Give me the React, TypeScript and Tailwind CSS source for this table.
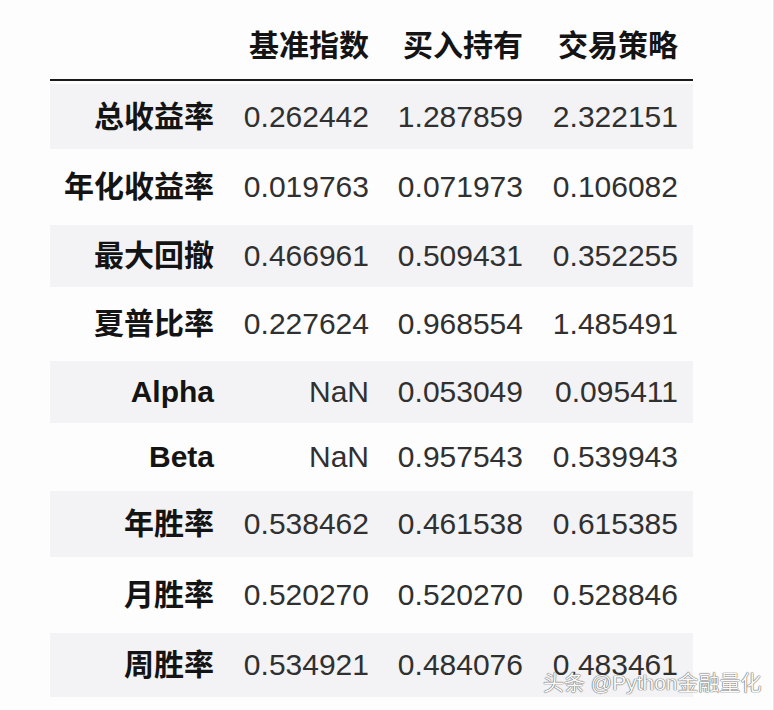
const columns = ["基准指数", "买入持有", "交易策略"];

type Row = {
  label: string;
  values: string[];
  height: string;
};

const rows: Row[] = [
  { label: "总收益率", values: ["0.262442", "1.287859", "2.322151"], height: "h-[71px]" },
  { label: "年化收益率", values: ["0.019763", "0.071973", "0.106082"], height: "h-[70px]" },
  { label: "最大回撤", values: ["0.466961", "0.509431", "0.352255"], height: "h-[68px]" },
  { label: "夏普比率", values: ["0.227624", "0.968554", "1.485491"], height: "h-[68px]" },
  { label: "Alpha", values: ["NaN", "0.053049", "0.095411"], height: "h-[68px]" },
  { label: "Beta", values: ["NaN", "0.957543", "0.539943"], height: "h-[62px]" },
  { label: "年胜率", values: ["0.538462", "0.461538", "0.615385"], height: "h-[72px]" },
  { label: "月胜率", values: ["0.520270", "0.520270", "0.528846"], height: "h-[70px]" },
  { label: "周胜率", values: ["0.534921", "0.484076", "0.483461"], height: "h-[70px]" },
];

const gridCols = "grid grid-cols-[179px_155px_154px_155px]";

export default function App() {
  return (
    <div className="relative w-[774px] h-[710px] overflow-hidden bg-[#fdfdfe] border-r border-[#e4e4e6] font-['Liberation_Sans','Noto_Sans_CJK_SC',sans-serif] text-[30px] leading-[36px]">
      <div className="ml-[50px] w-[643px]">
        <div className={`${gridCols} h-[81px] items-end pb-[15px] border-b-2 border-[#1a1a1a]`}>
          <div />
          {columns.map((column) => (
            <div key={column} className="text-right pr-[15px] font-bold text-[#141414]">
              {column}
            </div>
          ))}
        </div>

        {rows.map((row, index) => (
          <div key={row.label} className={`${row.height} py-[3px]`}>
            <div
              className={`${gridCols} h-full items-center ${
                index % 2 === 0 ? "bg-[#f3f3f5]" : ""
              }`}
            >
              <div className="text-right pr-[15px] font-bold text-[#141414]">
                {row.label}
              </div>
              {row.values.map((value, i) => (
                <div key={i} className="text-right pr-[15px] text-[#303030]">
                  {value}
                </div>
              ))}
            </div>
          </div>
        ))}
      </div>

      {/* watermark sits over the last row */}
      <div className="absolute left-[543px] top-[670px] text-[21px] leading-[26px] text-[#fafafa] [text-shadow:0_0_1px_#444,0_0_1px_#444]">
        头条 @Python金融量化
      </div>
    </div>
  );
}
